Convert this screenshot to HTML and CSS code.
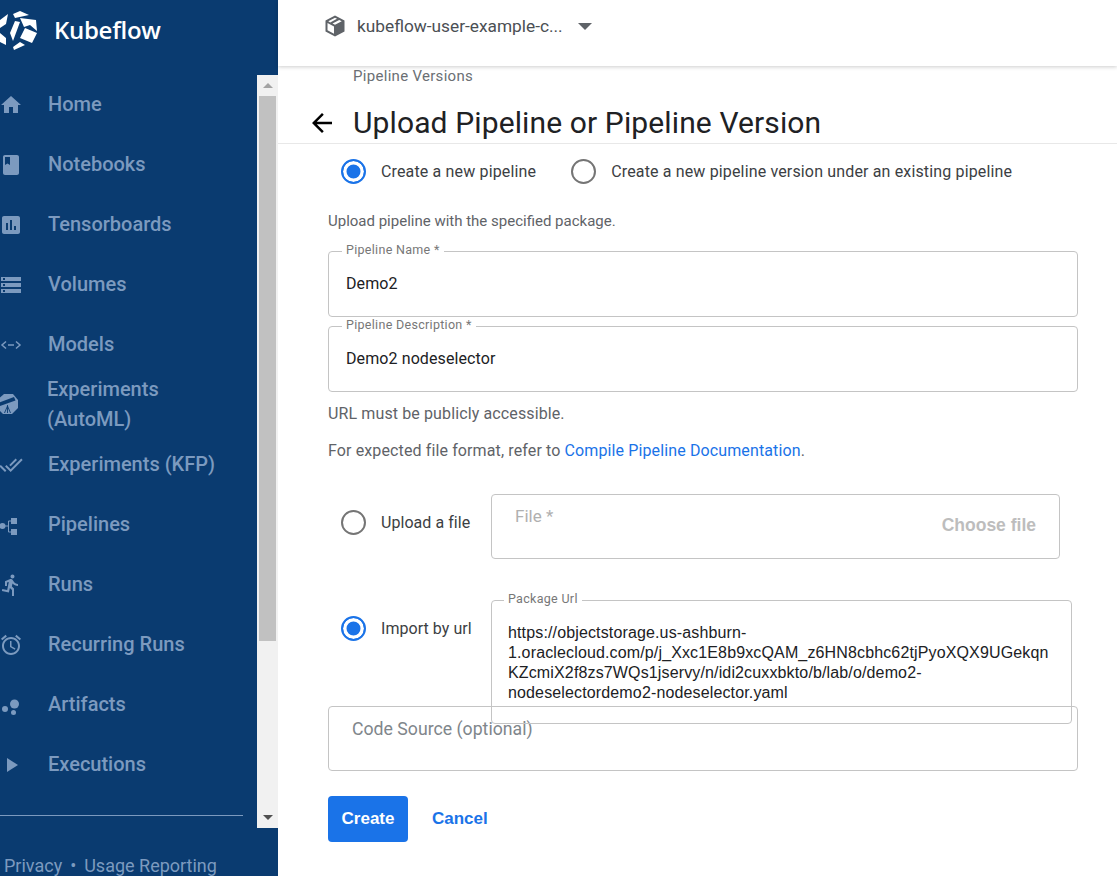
FILE: index.html
```html
<!DOCTYPE html>
<html lang="en">
<head>
  <meta charset="UTF-8">
  <title>Upload Pipeline or Pipeline Version</title>
  <link rel="stylesheet" href="styles.css">
</head>
<body>
  <aside class="sidebar">
    <div class="brand">
      <svg class="brand-logo" viewBox="0 10 40 42" width="40" height="42">
        <path fill="#fff" d="M13 14l7-3 9 4-14 3zM20 18l16 2 1 11-7-6-6 2zM0 20l8-6-2 10-6 4zM15 21l5 1-7 19-3-8zM25 28l12 5-5 10-12-5zM20 42l5 3-11 5-1-3zM0 33l6 5v7l-6-3z"/>
      </svg>
      <span class="brand-name">Kubeflow</span>
    </div>

    <div class="nav-wrap">
      <nav class="nav">
        <a class="nav-item"><svg class="nav-icon" viewBox="0 0 24 24"><path d="M10 20v-6h4v6h5v-8h3L12 3 2 12h3v8z"/></svg><span>Home</span></a>
        <a class="nav-item"><svg class="nav-icon" viewBox="0 0 24 24"><path d="M18 2H6c-1.100 0-2 .9-2 2v16c0 1.100.9 2 2 2h12c1.100 0 2-.9 2-2V4c0-1.100-.9-2-2-2zM6 4h5v8l-2.500-1.500L6 12V4z"/></svg><span>Notebooks</span></a>
        <a class="nav-item"><svg class="nav-icon" viewBox="0 0 24 24"><path d="M19 3H5c-1.100 0-2 .9-2 2v14c0 1.100.9 2 2 2h14c1.100 0 2-.9 2-2V5c0-1.100-.9-2-2-2zM9 17H7v-7h2v7zm4 0h-2V7h2v10zm4 0h-2v-4h2v4z"/></svg><span>Tensorboards</span></a>
        <a class="nav-item"><svg class="nav-icon" viewBox="0 0 24 24"><path d="M2 20h20v-4H2v4zm2-3h2v2H4v-2zM2 4v4h20V4H2zm4 3H4V5h2v2zm-4 7h20v-4H2v4zm2-3h2v2H4v-2z"/></svg><span>Volumes</span></a>
        <a class="nav-item"><svg class="nav-icon" viewBox="0 0 24 24"><path fill="none" stroke="currentColor" stroke-width="1.500" d="M7 8.500L3 12l4 3.500M17 8.500l4 3.500-4 3.500M9 12h6"/></svg><span>Models</span></a>
        <a class="nav-item nav-item-wrap"><svg class="nav-icon" viewBox="0 0 24 24"><path d="M5 1h9l5 6v8l-6 6H4l-6-6V7z"/><path fill="#0a3b70" d="M0 9.500L15 4l1.500 3.500L1 13z"/><path fill="none" stroke="#0a3b70" stroke-width=".9" d="M8.500 12v8M8.500 13l-3 7M8.500 13l3 7"/></svg><span>Experiments<br>(AutoML)</span></a>
        <a class="nav-item"><svg class="nav-icon" viewBox="0 0 24 24"><path d="M18 7l-1.410-1.410-6.340 6.340 1.410 1.410L18 7zm4.240-1.410L11.660 16.170 7.480 12l-1.410 1.410L11.660 19l12-12-1.420-1.410zM.41 13.410L6 19l1.410-1.410L1.830 12 .41 13.410z"/></svg><span>Experiments (KFP)</span></a>
        <a class="nav-item"><svg class="nav-icon" viewBox="0 0 24 24"><circle cx="3.500" cy="13" r="3"/><path d="M12 5h6v6h-6zM12 16h6v6h-6z"/><path fill="none" stroke="currentColor" d="M6 13h3M12 8H9.500v11H12"/></svg><span>Pipelines</span></a>
        <a class="nav-item"><svg class="nav-icon" viewBox="0 0 24 24"><path d="M13.490 5.480c1.100 0 2-.9 2-2s-.9-2-2-2-2 .9-2 2 .9 2 2 2zm-3.600 13.900l1-4.400 2.100 2v6h2v-7.500l-2.100-2 .6-3c1.300 1.500 3.300 2.500 5.500 2.500v-2c-1.900 0-3.500-1-4.300-2.400l-1-1.600c-.4-.6-1-1-1.700-1-.3 0-.5.1-.8.1l-5.200 2.200v4.700h2v-3.400l1.800-.7-1.600 8.100-4.900-1-.4 2 7 1.400z"/></svg><span>Runs</span></a>
        <a class="nav-item"><svg class="nav-icon" viewBox="0 0 24 24"><path d="M22 5.720l-4.600-3.860-1.290 1.530 4.600 3.860L22 5.720zM7.880 3.390L6.600 1.860 2 5.710l1.290 1.530 4.590-3.850zM12.500 8H11v6l4.750 2.850.75-1.230-4-2.370V8zM12 4c-4.970 0-9 4.030-9 9s4.020 9 9 9c4.970 0 9-4.030 9-9s-4.030-9-9-9zm0 16c-3.870 0-7-3.130-7-7s3.130-7 7-7 7 3.130 7 7-3.130 7-7 7z"/></svg><span>Recurring Runs</span></a>
        <a class="nav-item"><svg class="nav-icon" viewBox="0 0 24 24"><circle cx="15.500" cy="11" r="4.500"/><circle cx="6" cy="16" r="3"/><circle cx="14.500" cy="19.500" r="2.500"/></svg><span>Artifacts</span></a>
        <a class="nav-item"><svg class="nav-icon" viewBox="0 0 24 24"><path d="M8 5v14l11-7z"/></svg><span>Executions</span></a>
        <hr class="nav-rule">
      </nav>
      <div class="scrollbar">
        <div class="scroll-btn"><i class="arrow-up"></i></div>
        <div class="scroll-track"><div class="scroll-thumb"></div></div>
        <div class="scroll-btn"><i class="arrow-down"></i></div>
      </div>
    </div>

    <div class="side-foot">Privacy <b>•</b> Usage Reporting</div>
  </aside>

  <main class="main">
    <header class="topbar">
      <svg class="cube" viewBox="0 0 24 24" width="24" height="24">
        <path fill="#5f6368" d="M12 1.500L2.500 6.500v11L12 22.500l9.500-5v-11zm0 2.300l2 1L7.200 8.400 5.300 7.300zM16.200 6l2.500 1.300-6.700 3.500-2.500-1.400zM4.500 9l6.500 3.500v7.300l-6.500-3.500z"/>
      </svg>
      <span class="ns-name">kubeflow-user-example-c...</span>
      <i class="ns-caret"></i>
    </header>

    <div class="page-head">
      <div class="crumb">Pipeline Versions</div>
      <div class="title-row">
        <svg class="back" viewBox="0 0 24 24" width="30" height="30"><path d="M20 11H7.830l5.590-5.590L12 4l-8 8 8 8 1.410-1.410L7.830 13H20v-2z"/></svg>
        <h1>Upload Pipeline or Pipeline Version</h1>
      </div>
    </div>

    <form class="form">
      <div class="radio-row">
        <label class="radio-opt"><span class="radio on"></span>Create a new pipeline</label>
        <label class="radio-opt"><span class="radio"></span>Create a new pipeline version under an existing pipeline</label>
      </div>

      <p class="hint hint-top">Upload pipeline with the specified package.</p>

      <div class="field">
        <span class="field-label">Pipeline Name *</span>
        <div class="field-value">Demo2</div>
      </div>
      <div class="field field-desc">
        <span class="field-label">Pipeline Description *</span>
        <div class="field-value">Demo2 nodeselector</div>
      </div>

      <p class="hint hint-url">URL must be publicly accessible.</p>
      <p class="hint hint-doc">For expected file format, refer to <a class="doc-link">Compile Pipeline Documentation</a>.</p>

      <div class="source-row">
        <label class="radio-opt source-opt"><span class="radio"></span>Upload a file</label>
        <div class="file-box">
          <span class="file-label">File *</span>
          <span class="file-btn">Choose file</span>
        </div>
      </div>

      <div class="source-row url-row">
        <label class="radio-opt source-opt"><span class="radio on"></span>Import by url</label>
        <div class="url-box">
          <span class="field-label url-label">Package Url</span>
          <div class="url-text">https://objectstorage.us-ashburn-<br>1.oraclecloud.com/p/j_Xxc1E8b9xcQAM_z6HN8cbhc62tjPyoXQX9UGekqn<br>KZcmiX2f8zs7WQs1jservy/n/idi2cuxxbkto/b/lab/o/demo2-<br>nodeselectordemo2-nodeselector.yaml</div>
        </div>
      </div>

      <div class="code-box">Code Source (optional)</div>

      <div class="actions">
        <button type="button" class="btn-create">Create</button>
        <button type="button" class="btn-cancel">Cancel</button>
      </div>
    </form>
  </main>
</body>
</html>
```

FILE: styles.css
```css
* {
  box-sizing: border-box;
}
html, body {
  height: 100%;
}
body {
  margin: 0;
  display: flex;
  height: 876px;
  overflow: hidden;
  background: #fff;
  color: #202124;
  font-family: Roboto, Arial, sans-serif;
}

/* sidebar */
.sidebar {
  width: 278px;
  flex: none;
  display: flex;
  flex-direction: column;
  background: #0a3b70;
  color: #7c9abf;
  overflow: hidden;
}
.brand {
  height: 75px;
  flex: none;
  display: flex;
  align-items: flex-start;
  padding-top: 10px;
}
.brand-logo {
  flex: none;
}
.brand-name {
  margin: 4px 0 0 14px;
  color: #fff;
  font-family: "Open Sans", Roboto, sans-serif;
  font-size: 24px;
  font-weight: 600;
  line-height: 32px;
  letter-spacing: -0.3px;
}
.nav-wrap {
  height: 753px;
  flex: none;
  display: flex;
}
.nav {
  width: 257px;
  flex: none;
}
.nav-item {
  height: 60px;
  display: flex;
  align-items: center;
  font-size: 20px;
  font-weight: 500;
  line-height: 30px;
}
.nav-item span {
  margin-left: 25px;
  padding-bottom: 2px;
}
.nav-item-wrap span {
  margin-left: 24px;
}
.nav-icon {
  width: 24px;
  height: 24px;
  flex: none;
  margin-left: -1px;
  fill: currentColor;
}
.nav-rule {
  width: 243px;
  height: 1px;
  margin: 20px 0 0;
  border: 0;
  background: #7c9abf;
}
.scrollbar {
  width: 21px;
  flex: none;
  display: flex;
  flex-direction: column;
  background: #f1f1f1;
}
.scroll-btn {
  height: 21px;
  flex: none;
  display: flex;
  align-items: center;
  justify-content: center;
}
.scroll-track {
  flex: 1;
  padding: 0 2px;
}
.scroll-thumb {
  height: 545px;
  background: #c1c1c1;
}
.arrow-up, .arrow-down {
  width: 0;
  height: 0;
  border-left: 5px solid transparent;
  border-right: 5px solid transparent;
}
.arrow-up {
  border-bottom: 5px solid #a3a3a3;
}
.arrow-down {
  border-top: 5px solid #505050;
}
.side-foot {
  padding: 28px 0 0 4px;
  font-size: 18px;
  line-height: 20px;
  white-space: nowrap;
}
.side-foot b {
  margin: 0 3.500px;
  font-weight: 400;
}

/* main */
.main {
  flex: 1;
  min-width: 0;
}
.topbar {
  height: 66px;
  display: flex;
  align-items: flex-start;
  padding: 14px 0 0 45px;
  box-shadow: 0 1px 4px rgba(0, 0, 0, 0.2);
}
.ns-name {
  margin-left: 10px;
  color: #4b4f54;
  font-size: 17.300px;
  line-height: 24px;
}
.ns-caret {
  width: 0;
  height: 0;
  margin: 9px 0 0 15px;
  border-left: 7px solid transparent;
  border-right: 7px solid transparent;
  border-top: 7px solid #5f6368;
}
.page-head {
  height: 78px;
  padding-left: 29px;
  border-bottom: 1px solid #e8e8e8;
}
.crumb {
  margin-left: 46px;
  color: #6b6f74;
  font-size: 15px;
  letter-spacing: 0.3px;
  line-height: 20px;
}
.title-row {
  display: flex;
  align-items: center;
  margin-top: 18px;
}
.back {
  flex: none;
}
.title-row h1 {
  margin: 0 0 0 16px;
  font-size: 30px;
  font-weight: 400;
  letter-spacing: 0.12px;
  line-height: 38px;
}
.form {
  padding: 0 0 0 50px;
}
.radio-row {
  display: flex;
  height: 54px;
  align-items: center;
  padding-left: 13px;
  gap: 35px;
}
.radio-opt {
  display: flex;
  align-items: center;
  gap: 15px;
  font-size: 16px;
  letter-spacing: 0.15px;
  color: #3c4043;
}
.radio {
  width: 25px;
  height: 25px;
  flex: none;
  border: 2.500px solid #757575;
  border-radius: 50%;
  background: #fff;
}
.radio.on {
  border-color: #1a73e8;
  box-shadow: inset 0 0 0 3.500px #fff;
  background: #1a73e8;
}
.hint {
  margin: 0;
  color: #5f6368;
  font-size: 15px;
  line-height: 20px;
}
.hint-top {
  margin-top: 13px;
  margin-bottom: 20px;
}
.field {
  position: relative;
  width: 750px;
  height: 66px;
  display: flex;
  align-items: center;
  padding: 0 0 2px 17px;
  border: 1px solid #c4c4c4;
  border-radius: 4px;
}
.field-desc {
  margin-top: 9px;
}
.field-label {
  position: absolute;
  top: -10px;
  left: 13px;
  padding: 0 4px;
  background: #fff;
  color: #777;
  font-size: 12.500px;
  letter-spacing: 0.3px;
  line-height: 16px;
  white-space: nowrap;
}
.field-value {
  font-size: 16px;
  letter-spacing: 0.1px;
  color: #202124;
}
.hint-url, .hint-doc {
  font-size: 16px;
  letter-spacing: 0.12px;
}
.hint-url {
  margin-top: 12px;
}
.hint-doc {
  margin-top: 17px;
}
.doc-link {
  color: #1a73e8;
}
.source-row {
  display: flex;
  align-items: center;
  margin-top: 33px;
}
.source-opt {
  width: 163px;
  flex: none;
  padding: 0 0 9px 13px;
  letter-spacing: 0.05px;
}
.file-box {
  width: 569px;
  height: 65px;
  display: flex;
  justify-content: space-between;
  padding: 11px 23px 0 23px;
  border: 1px solid #c4c4c4;
  border-radius: 4px;
}
.file-label {
  color: #b0b0b0;
  font-size: 17px;
  line-height: 20px;
}
.file-btn {
  margin-top: 9px;
  color: #bdbdbd;
  font-family: "Liberation Sans", Arial, sans-serif;
  font-size: 17.500px;
  font-weight: 700;
  line-height: 20px;
}
.url-row {
  height: 106px;
  margin-top: 41px;
  align-items: flex-start;
}
.url-row .source-opt {
  margin-top: 16px;
  padding-bottom: 0;
}
.url-box {
  position: relative;
  z-index: 1;
  width: 581px;
  height: 124px;
  flex: none;
  padding: 22px 10px 0 16px;
  border: 1px solid #c4c4c4;
  border-radius: 4px;
}
.url-label {
  left: 12px;
}
.url-text {
  color: #202124;
  font-family: "Liberation Sans", Arial, sans-serif;
  font-size: 16px;
  letter-spacing: 0.14px;
  line-height: 20px;
  white-space: nowrap;
}
.code-box {
  width: 750px;
  height: 65px;
  padding: 12px 23px 0;
  border: 1px solid #c4c4c4;
  border-radius: 4px;
  color: #80868b;
  font-size: 17.700px;
  line-height: 20px;
}
.actions {
  display: flex;
  align-items: center;
  gap: 24px;
  margin-top: 25px;
}
.btn-create, .btn-cancel {
  border: 0;
  font-family: "Liberation Sans", Arial, sans-serif;
  font-size: 17px;
  font-weight: 700;
  cursor: pointer;
}
.btn-create {
  width: 80px;
  height: 46px;
  border-radius: 4px;
  background: #1a73e8;
  color: #fff;
}
.btn-cancel {
  padding: 0;
  background: none;
  color: #1a73e8;
}
```
